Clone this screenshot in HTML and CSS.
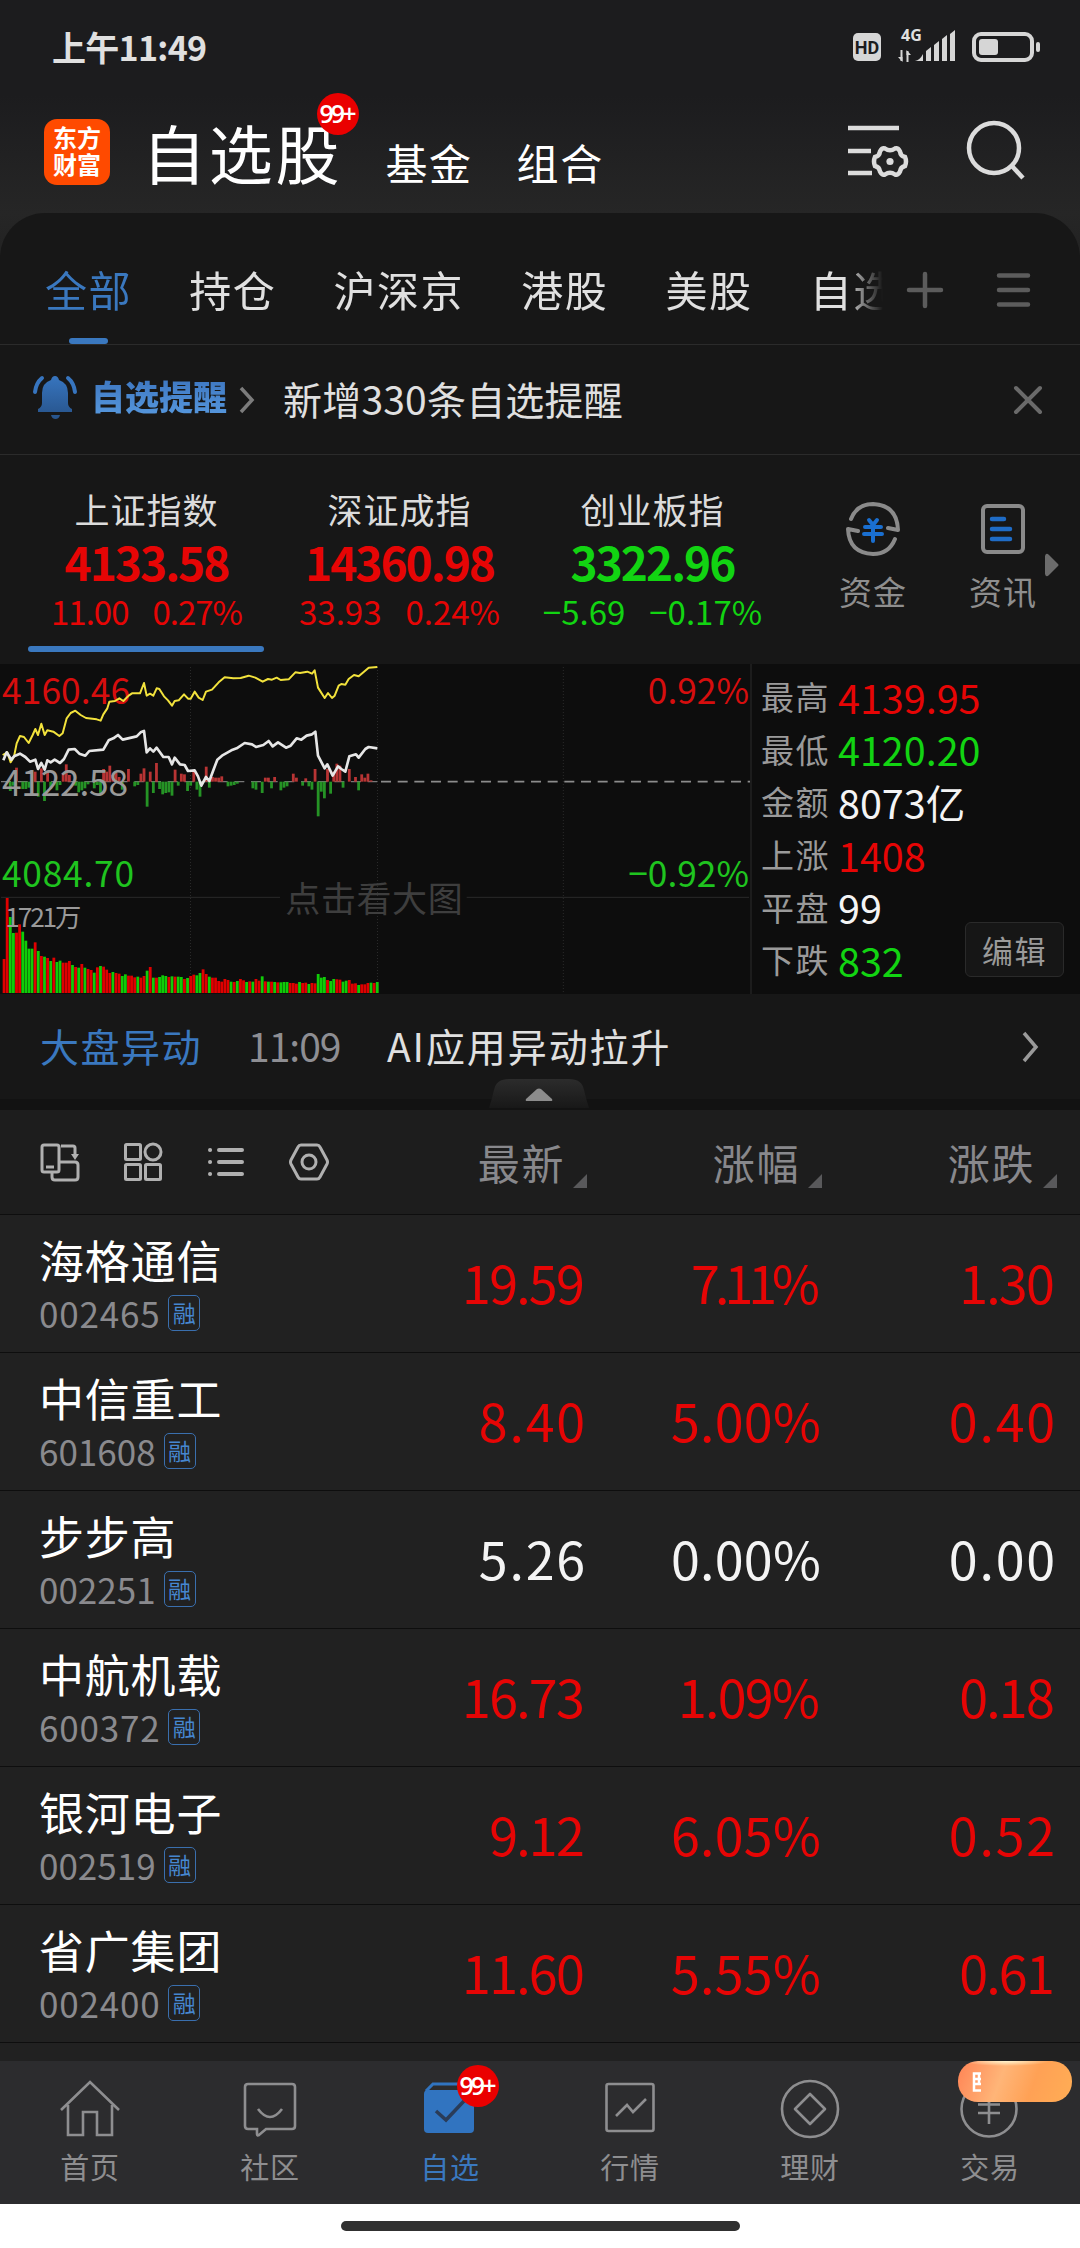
FILE: index.html
```html
<!DOCTYPE html>
<html lang="zh-CN">
<head>
  <meta charset="UTF-8" />
  <meta name="viewport" content="width=device-width, initial-scale=1.0" />
  <title>自选股</title>
  <link rel="stylesheet" href="styles.css">
</head>
<body>
  <div class="top">
    <div class="status-bar">
      <span class="time">上午11:49</span>
      <div class="status-icons">
        <span class="hd">HD</span>
        <div class="signal">
          <span class="net">4G</span>
          <svg width="58" height="32" viewBox="0 0 58 32" fill="#d6d6d6">
            <path d="M3.5 18v11M9.500 19v11" stroke="#d6d6d6" stroke-width="2" />
            <path d="M0 25l4.500 5v-5zM13 23l-4.500-5v5z" />
            <path d="M17 29q5-1 8-7v7zM28 19l5-4v14h-5zM36 13l5-4v20h-5zM44 7l5-4v26h-5zM52 2l5-4v31h-5z" />
          </svg>
        </div>
        <svg class="battery" width="69" height="32" viewBox="0 0 69 32" fill="none">
          <rect x="2" y="3" width="58" height="26" rx="7" stroke="#d6d6d6" stroke-width="4" />
          <rect x="7" y="8" width="19" height="16" rx="3" fill="#d6d6d6" />
          <rect x="64" y="11" width="4" height="10" rx="2" fill="#d6d6d6" />
        </svg>
      </div>
    </div>

    <div class="header">
      <div class="logo">东方<br>财富</div>
      <div class="title">自选股<span class="badge">99+</span></div>
      <div class="header-link">基金</div>
      <div class="header-link">组合</div>
      <svg class="settings-icon" width="62" height="62" viewBox="0 0 62 62" fill="none" stroke="#dcdcdc" stroke-width="4.500">
        <path d="M1 8h51M1 31h23M1 53h24" />
        <path d="M38 28.500q5 3.500 10 0 3-1 5 3 .5 4.500 5 5.500 2 4.500 0 9-4.500 1-5 5.500-2 4-5 3-5-3.500-10 0-3 1-5-3-.5-4.500-5-5.500-2-4.500 0-9 4.500-1 5-5.500 2-4 5-3z" />
        <circle cx="43" cy="41.500" r="3.600" fill="#dcdcdc" stroke="none" />
      </svg>
      <svg class="search-icon" width="62" height="62" viewBox="0 0 62 62" fill="none" stroke="#dcdcdc" stroke-width="4.500">
        <circle cx="28" cy="28" r="25" />
        <path d="M45 45l12 13" />
      </svg>
    </div>
  </div>

  <div class="panel">
    <div class="tabs">
      <div class="tab-list">
        <span class="tab active">全部</span>
        <span class="tab">持仓</span>
        <span class="tab">沪深京</span>
        <span class="tab">港股</span>
        <span class="tab">美股</span>
        <span class="tab">自选</span>
      </div>
      <svg width="38" height="38" viewBox="0 0 38 38" stroke="#5c5c5c" stroke-width="4.500" stroke-linecap="round">
        <path d="M19 3v32M3 19h32" />
      </svg>
      <svg class="menu-icon" width="38" height="38" viewBox="0 0 38 38" stroke="#5c5c5c" stroke-width="4.500" stroke-linecap="round">
        <path d="M5 4.500h29M5 19h29M5 33.500h29" />
      </svg>
    </div>

    <div class="alert">
      <svg width="46" height="46" viewBox="0 0 46 46">
        <defs>
          <linearGradient id="bell" x1="0" y1="0" x2="0" y2="1">
            <stop offset="0" stop-color="#3775bf" />
            <stop offset="1" stop-color="#27538a" />
          </linearGradient>
        </defs>
        <path fill="url(#bell)" d="M23 2q3 0 4 4 9 3 9 13v10q0 4 4 6v3H6v-3q4-2 4-6V19q0-10 9-13 1-4 4-4zM19 41h9q-1 4-4.500 4t-4.500-4z" />
        <path d="M3 18q1-9 7-14M43 18q-1-9-7-14" fill="none" stroke="#3775bf" stroke-width="4" stroke-linecap="round" />
      </svg>
      <span class="alert-title">自选提醒</span>
      <svg width="16" height="28" viewBox="0 0 16 28" fill="none" stroke="#7c7c7c" stroke-width="3.500">
        <path d="M2 2l11 12L2 26" />
      </svg>
      <span class="alert-text">新增330条自选提醒</span>
      <svg class="close" width="30" height="30" viewBox="0 0 30 30" stroke="#6a6a6a" stroke-width="4" stroke-linecap="round">
        <path d="M3 3l24 24M27 3L3 27" />
      </svg>
    </div>

    <div class="indexes">
      <div class="index up active">
        <span class="index-name">上证指数</span>
        <span class="index-value">4133.58</span>
        <span class="index-change narrow"><b>11.00</b><b>0.27%</b></span>
      </div>
      <div class="index up">
        <span class="index-name">深证成指</span>
        <span class="index-value">14360.98</span>
        <span class="index-change"><b>33.93</b><b>0.24%</b></span>
      </div>
      <div class="index down">
        <span class="index-name">创业板指</span>
        <span class="index-value">3322.96</span>
        <span class="index-change"><b>−5.69</b><b>−0.17%</b></span>
      </div>
      <div class="quick">
        <svg width="56" height="56" viewBox="0 0 56 56" fill="none" stroke="#8a8a8a" stroke-width="4" stroke-linecap="round" stroke-linejoin="round">
          <path d="M6 18Q12 3 28 3q24 1 25 26l-10-2M50 38q-6 15-22 15Q4 52 3 28l10 2" />
          <path d="M24 19l4 5 4-5M20 26h16M19 33h18M28 24v16" stroke="#1a6fd0" />
        </svg>
        <span>资金</span>
      </div>
      <div class="quick">
        <svg width="56" height="56" viewBox="0 0 56 56" fill="none" stroke-linecap="round">
          <rect x="8" y="5" width="40" height="46" rx="4" stroke="#8a8a8a" stroke-width="4" />
          <path d="M17 18h12M17 28h18M17 38h18" stroke="#1f6cc6" stroke-width="4.500" />
        </svg>
        <span>资讯</span>
      </div>
      <svg class="more" width="14" height="24" viewBox="0 0 14 24" fill="#6c6c6c">
        <path d="M0 3q1-4 4-1l9 9q1 1 0 2l-9 9q-3 3-4-1z" />
      </svg>
    </div>
  </div>

  <div class="market">
    <svg class="chart" id="chart" width="750" height="330" viewBox="0 27 2250 990">
      <g stroke="#2a2a2a" stroke-width="3" stroke-dasharray="3 6">
        <path d="M571.500 36V1014M1132.500 36V1014M1690 36V1014" />
      </g>
      <path d="M3 727H840M1400 727H2247" stroke="#292929" stroke-width="3" />
      <path d="M1143 380H2250" stroke="#8c8c8c" stroke-width="5" stroke-dasharray="30 20" />
      <path d="M3 380H1132" stroke="#777" stroke-width="4" stroke-dasharray="30 20" />
      <g id="ticks"></g>
      <g id="volume"></g>
      <text class="label up" x="6" y="147" textLength="384">4160.46</text>
      <text class="label mid" x="6" y="422" textLength="378">4122.58</text>
      <text class="label down" x="6" y="696" textLength="396">4084.70</text>
      <text class="label up" x="2247" y="147" text-anchor="end">0.92%</text>
      <text class="label down" x="2247" y="696" text-anchor="end">−0.92%</text>
      <text class="label vol" x="16" y="816" textLength="228">1721万</text>
      <text class="label hint" x="856" y="770" textLength="532">点击看大图</text>
      <polyline id="avg" fill="none" stroke="#f2e23c" stroke-width="6" stroke-linejoin="round" />
      <polyline id="price" fill="none" stroke="#e6e6e6" stroke-width="8" stroke-linejoin="round" />
    </svg>
    <div class="summary">
      <div class="summary-row"><span>最高</span><span class="up">4139.95</span></div>
      <div class="summary-row"><span>最低</span><span class="down">4120.20</span></div>
      <div class="summary-row"><span>金额</span><span class="flat">8073亿</span></div>
      <div class="summary-row"><span>上涨</span><span class="up">1408</span></div>
      <div class="summary-row"><span>平盘</span><span class="flat">99</span></div>
      <div class="summary-row"><span>下跌</span><span class="down">832</span></div>
      <button class="edit-btn">编辑</button>
    </div>
  </div>

  <div class="news">
    <span class="news-tag">大盘异动</span>
    <span class="news-time">11:09</span>
    <span class="news-text">AI应用异动拉升</span>
    <svg class="news-arrow" width="18" height="32" viewBox="0 0 18 32" fill="none" stroke="#9a9a9a" stroke-width="3.500">
      <path d="M2 2l12 14L2 30" />
    </svg>
    <svg class="handle" width="100" height="29" viewBox="0 0 100 29">
      <defs>
        <linearGradient id="tab" x1="0" y1="0" x2="0" y2="1">
          <stop offset="0" stop-color="#2c2c2c" />
          <stop offset="1" stop-color="#181818" />
        </linearGradient>
      </defs>
      <path fill="url(#tab)" d="M0 29Q3 20 5 11 7 0 20 0h60q13 0 15 11 2 9 5 18z" />
      <path fill="#8c8c8c" d="M37 20l11-10q2-1 4 0l11 10q1 2-1 2H38q-2 0-1-2z" />
    </svg>
  </div>

  <div class="stock-table">
    <div class="table-head">
      <div class="tools">
        <svg width="40" height="40" viewBox="0 0 40 40" fill="none" stroke="#b0b0b0" stroke-width="3">
          <rect x="2" y="3" width="17" height="27" rx="2" />
          <path d="M6 25h8M21 4h12q2 0 2 2v9M12 30v5q0 3 3 3h20q3 0 3-3V23q0-3-3-3H19" />
          <path d="M31 12h8l-4 6z" fill="#b0b0b0" stroke="none" />
        </svg>
        <svg width="40" height="40" viewBox="0 0 40 40" fill="none" stroke="#b0b0b0" stroke-width="3">
          <rect x="2.500" y="2.500" width="15" height="15" rx="1" />
          <circle cx="30" cy="10" r="8" />
          <rect x="2.500" y="22.500" width="15" height="15" rx="1" />
          <rect x="22.500" y="22.500" width="15" height="15" rx="1" />
        </svg>
        <svg width="40" height="40" viewBox="0 0 40 40" stroke="#b0b0b0" stroke-width="4" stroke-linecap="round">
          <path d="M4 8h.1M4 20h.1M4 32h.1M13 8h23M13 20h23M13 32h23" />
        </svg>
        <svg width="40" height="40" viewBox="0 0 40 40" fill="none" stroke="#b0b0b0" stroke-width="3">
          <path d="M12 3h16q2 0 3 2l7 13q1 2 0 4l-7 13q-1 2-3 2H12q-2 0-3-2L2 22q-1-2 0-4L9 5q1-2 3-2z" />
          <circle cx="20" cy="20" r="7" />
        </svg>
      </div>
      <span class="col">最新</span>
      <span class="col">涨幅</span>
      <span class="col">涨跌</span>
    </div>
    <div class="stock up">
      <div class="stock-info">
        <div class="stock-name">海格通信</div>
        <div class="stock-code">002465<span class="margin">融</span></div>
      </div>
      <span class="one">19.59</span>
      <span class="two">7.11%</span>
      <span class="one">1.30</span>
    </div>
    <div class="stock up">
      <div class="stock-info">
        <div class="stock-name">中信重工</div>
        <div class="stock-code narrow">601608<span class="margin">融</span></div>
      </div>
      <span>8.40</span>
      <span class="pct">5.00%</span>
      <span>0.40</span>
    </div>
    <div class="stock flat">
      <div class="stock-info">
        <div class="stock-name">步步高</div>
        <div class="stock-code narrow">002251<span class="margin">融</span></div>
      </div>
      <span>5.26</span>
      <span class="pct">0.00%</span>
      <span>0.00</span>
    </div>
    <div class="stock up">
      <div class="stock-info">
        <div class="stock-name">中航机载</div>
        <div class="stock-code">600372<span class="margin">融</span></div>
      </div>
      <span class="one">16.73</span>
      <span class="one">1.09%</span>
      <span class="one">0.18</span>
    </div>
    <div class="stock up">
      <div class="stock-info">
        <div class="stock-name">银河电子</div>
        <div class="stock-code narrow">002519<span class="margin">融</span></div>
      </div>
      <span class="one">9.12</span>
      <span class="pct">6.05%</span>
      <span>0.52</span>
    </div>
    <div class="stock up">
      <div class="stock-info">
        <div class="stock-name">省广集团</div>
        <div class="stock-code">002400<span class="margin">融</span></div>
      </div>
      <span class="one">11.60</span>
      <span class="pct">5.55%</span>
      <span class="one">0.61</span>
    </div>
  </div>

  <div class="nav">
    <div class="nav-item">
      <svg width="64" height="64" viewBox="0 0 64 64" fill="none" stroke="#8e8e90" stroke-width="2.600">
        <path d="M3 33L32 5l29 28M10 28v30h15V35h14v23h15V28" />
      </svg>
      <span>首页</span>
    </div>
    <div class="nav-item">
      <svg width="64" height="64" viewBox="0 0 64 64" fill="none" stroke="#8e8e90" stroke-width="2.600">
        <path d="M10 7h44q3 0 3 3v39q0 3-3 3H28l-7 6q-2 1-2-1v-5h-9q-3 0-3-3V10q0-3 3-3z" />
        <path d="M20 32q12 16 24 0" />
      </svg>
      <span>社区</span>
    </div>
    <div class="nav-item active">
      <svg width="64" height="64" viewBox="0 0 64 64" fill="none">
        <path d="M8 14l7-7h35l7 7" stroke="#3174c0" stroke-width="3" />
        <rect x="6" y="13" width="50" height="43" rx="4" fill="#3174c0" />
        <path d="M18 34l10 9 18-19" stroke="#2a3c58" stroke-width="3.500" />
      </svg>
      <span>自选</span>
      <span class="badge">99+</span>
    </div>
    <div class="nav-item">
      <svg width="64" height="64" viewBox="0 0 64 64" fill="none" stroke="#8e8e90" stroke-width="2.600">
        <rect x="8.500" y="7" width="47" height="47" rx="2" />
        <path d="M18 39l11-11 6 7 13-13" />
      </svg>
      <span>行情</span>
    </div>
    <div class="nav-item">
      <svg width="64" height="64" viewBox="0 0 64 64" fill="none" stroke="#8e8e90" stroke-width="2.600" stroke-linejoin="round">
        <circle cx="32" cy="32" r="28" />
        <path d="M32 17l15 15-15 15-15-15z" />
      </svg>
      <span>理财</span>
    </div>
    <div class="nav-item">
      <svg width="64" height="64" viewBox="0 0 64 64" fill="none" stroke="#8e8e90" stroke-width="2.600">
        <circle cx="31" cy="32" r="27.500" />
        <path d="M24 17l7 8 7-8M20 27.500h22M20 36h22M31 25v22" />
      </svg>
      <span>交易</span>
      <span class="promo"><svg width="9" height="20" viewBox="0 0 9 20" fill="none" stroke="#fff" stroke-width="2.500"><path d="M9 1.500H2v17h7M2 7h7M2 12h7M7 1v12" /></svg></span>
    </div>
  </div>
  <div class="home-bar"></div>

  <script src="script.js"></script>
</body>
</html>
```
FILE: styles.css
```css
* {
  margin: 0;
  padding: 0;
  box-sizing: border-box;
}

body {
  width: 1080px;
  height: 2248px;
  background: #fff;
  font-family: 'Noto Sans CJK SC', 'Noto Sans', sans-serif;
  color: #e0e0e0;
  overflow: hidden;
}

svg {
  display: block;
  flex-shrink: 0;
}

span, .title, .header-link {
  white-space: nowrap;
}

.up { color: #e60505; fill: #d60e0e; }
.down { color: #12d412; fill: #1fc41f; }
.flat { color: #f4f4f4; }

/* top */
.top {
  height: 258px;
  background: linear-gradient(180deg, #1c1c1e 0, #1c1c1e 95px, #262626 213px, #222 258px);
}

.status-bar {
  height: 94px;
  display: flex;
  justify-content: space-between;
  align-items: center;
  padding: 0 39px 0 52px;
}

.time {
  font-size: 34px;
  font-weight: 700;
  letter-spacing: -0.7px;
  line-height: 90px;
}

.status-icons {
  display: flex;
  align-items: center;
}

.hd {
  width: 28px;
  height: 28px;
  border-radius: 5px;
  background: #d6d6d6;
  color: #1c1c1e;
  font: 700 18px/29px Roboto, sans-serif;
  text-align: center;
}

.signal {
  position: relative;
  margin: 0 16px 0 17px;
  padding-top: 2px;
}

.signal svg {
  overflow: visible;
}

.net {
  position: absolute;
  left: 3px;
  top: -3px;
  font: 700 16px/16px 'Open Sans', sans-serif;
}

.header {
  height: 119px;
  display: flex;
  align-items: center;
  padding-left: 44px;
}

.logo {
  width: 66px;
  height: 66px;
  margin-top: -4px;
  border-radius: 13px;
  background: #ff4a00;
  color: #fff;
  font-size: 24px;
  font-weight: 700;
  line-height: 27px;
  padding-top: 4px;
  text-align: center;
}

.title {
  position: relative;
  margin-left: 32px;
  color: #fff;
  font-size: 64px;
  letter-spacing: 2.8px;
  line-height: 80px;
  margin-top: -5px;
}

.badge {
  position: absolute;
  width: 42px;
  height: 42px;
  border-radius: 50%;
  background: #ea0000;
  color: #fff;
  font: 600 25px/41px 'Open Sans', sans-serif;
  letter-spacing: -3px;
  text-indent: -3px;
  text-align: center;
}

.title .badge {
  left: 175px;
  top: -18px;
}

.header-link {
  color: #fff;
  font-size: 42px;
  letter-spacing: 1.6px;
  margin-left: 44px;
  margin-top: 15px;
}

.title + .header-link {
  margin-left: 43px;
}

.settings-icon {
  margin-left: auto;
  margin-top: -6px;
}

.search-icon {
  margin: -6px 52px 0 57px;
}

/* panel */
.panel {
  position: relative;
  margin-top: -45px;
  height: 451px;
  border-radius: 45px 45px 0 0;
  background: #171717;
}

.tabs {
  height: 132px;
  display: flex;
  align-items: center;
  padding: 23px 48px 0 45px;
  border-bottom: 1px solid #2b2b2b;
}

.tab-list {
  display: flex;
  gap: 57px;
  width: 838px;
  margin-right: 23px;
  height: 108px;
  overflow: hidden;
  -webkit-mask-image: linear-gradient(90deg, #000 800px, transparent 838px);
  mask-image: linear-gradient(90deg, #000 800px, transparent 838px);
}

.tab {
  position: relative;
  font-size: 42px;
  letter-spacing: 1.6px;
  line-height: 105px;
}

.tab.active {
  color: #3a78bf;
}

.tab.active::after {
  content: '';
  position: absolute;
  left: 24px;
  bottom: 0;
  width: 39px;
  height: 6px;
  border-radius: 3px;
  background: #3a78bf;
}

.menu-icon {
  margin-left: auto;
}

.alert {
  height: 110px;
  display: flex;
  align-items: center;
  padding: 0 37px 0 32px;
  border-bottom: 1px solid #2b2b2b;
}

.alert > svg:first-child {
  margin-top: -6px;
}

.alert-title {
  font-size: 34px;
  font-weight: 900;
  line-height: 46px;
  width: 148px;
  margin-top: -8px;
  margin-left: 13px;
  background: linear-gradient(180deg, #3a72bd, #589adf);
  -webkit-background-clip: text;
  background-clip: text;
  color: transparent;
}

.alert-text {
  font-size: 39px;
  letter-spacing: 0.2px;
  margin-left: 28px;
  margin-top: -3px;
}

.close {
  margin-left: auto;
}

.indexes {
  display: flex;
  padding-left: 20px;
  height: 208px;
}

.index {
  position: relative;
  width: 253px;
  display: flex;
  flex-direction: column;
  align-items: center;
  padding-top: 28px;
}

.index-name {
  font-size: 35px;
  letter-spacing: 1px;
  line-height: 52px;
  color: #dcdcdc;
}

.index-value {
  font-size: 46px;
  font-weight: 700;
  letter-spacing: -2px;
  line-height: 53px;
}

.index-change {
  display: flex;
  gap: 24px;
  font-size: 33px;
  line-height: 46px;
}

.index-change b {
  font-weight: 400;
}

.index-change.narrow {
  letter-spacing: -1px;
}

.index.active::after {
  content: '';
  position: absolute;
  left: 8px;
  bottom: 11px;
  width: 236px;
  height: 6px;
  border-radius: 3px;
  background: #3a78bf;
}

.quick {
  width: 130px;
  display: flex;
  flex-direction: column;
  align-items: center;
  padding-top: 46px;
  margin-left: 29px;
  font-size: 33px;
  letter-spacing: 1px;
  color: #8e8e8e;
}

.quick + .quick {
  margin-left: 0;
}

.quick span {
  line-height: 46px;
  margin-top: 11px;
}

.more {
  position: absolute;
  left: 1045px;
  top: 340px;
}

/* chart */
.market {
  height: 330px;
  display: flex;
  background: #0d0d0d;
}

.label {
  font-size: 106px;
}

.label.mid { fill: #9a9a9a; }
.label.vol { fill: #9a9a9a; font-size: 79px; }
.label.hint { fill: #3e3e3e; font-size: 105px; }

.summary {
  position: relative;
  flex: 1;
  border-left: 2px solid #1c1c1c;
  padding: 6px 0 0 9px;
}

.summary-row {
  display: flex;
  gap: 8px;
  height: 52.6px;
  align-items: center;
  color: #9a9a9a;
  font-size: 33px;
  letter-spacing: 1.5px;
}

.summary-row span + span {
  font-size: 39.5px;
  letter-spacing: 0;
}

.edit-btn {
  position: absolute;
  left: 213px;
  top: 258px;
  width: 99px;
  height: 55px;
  border: 1px solid #2a2a2a;
  border-radius: 6px;
  background: #161616;
  color: #9a9a9a;
  font: 31px/46px 'Noto Sans CJK SC', sans-serif;
  letter-spacing: 1.5px;
}

/* news */
.news {
  position: relative;
  height: 116px;
  display: flex;
  padding: 0 40px;
  font-size: 39px;
  line-height: 102px;
  background: #171717;
  border-bottom: 11px solid #121212;
}

.news-tag {
  color: #3a78bf;
  letter-spacing: 1.5px;
  width: 208px;
}

.news-time {
  color: #8e8e93;
  width: 139px;
  letter-spacing: -1px;
}

.news-text {
  letter-spacing: 1.9px;
}

.news-arrow {
  margin: 37px 0 0 auto;
}

.handle {
  position: absolute;
  left: 489px;
  top: 85px;
}

/* table */
.stock-table {
  height: 951px;
  background: #212121;
}

.table-head, .stock {
  display: grid;
  grid-template-columns: 352px 235px 235px 235px;
  align-items: center;
  border-bottom: 1.5px solid #0e0e0e;
}

.table-head {
  height: 105px;
  background: #1d1d1d;
}

.tools {
  display: flex;
  gap: 43px;
  padding-left: 40px;
  margin-top: -1px;
}

.col {
  position: relative;
  padding-right: 22px;
  text-align: right;
  color: #88888c;
  font-size: 42px;
  letter-spacing: 1.6px;
  line-height: 60px;
}

.col::after {
  content: '';
  position: absolute;
  right: 0;
  bottom: 4px;
  border-left: 14px solid transparent;
  border-bottom: 14px solid #59595b;
}

.stock {
  height: 138px;
}

.stock-info {
  padding-left: 39px;
}

.stock-name {
  color: #fff;
  font-size: 45px;
  letter-spacing: 0.8px;
  line-height: 56px;
}

.stock-code {
  display: flex;
  align-items: center;
  color: #8a8a8e;
  font-size: 35px;
  letter-spacing: 0.8px;
  line-height: 48px;
  position: relative;
  top: 1.5px;
}

.stock-code.narrow {
  letter-spacing: 0;
}

.margin {
  width: 32px;
  height: 36px;
  margin-left: 8px;
  border: 1.5px solid #3a6fae;
  border-radius: 5px;
  color: #4687d0;
  font-size: 23px;
  line-height: 32px;
  letter-spacing: 0;
  text-align: center;
}

.stock > span {
  text-align: right;
  font-size: 52px;
  line-height: 76px;
  letter-spacing: 1.8px;
  margin-top: -3px;
}

.stock > .pct {
  letter-spacing: 0.2px;
  padding-right: 1px;
}

/* narrow figure one */
.stock > .one {
  letter-spacing: -1.8px;
  padding-right: 4px;
}

.stock > .two {
  letter-spacing: -5px;
  padding-right: 7px;
}

/* bottom nav */
.nav {
  height: 143px;
  display: flex;
  background: #2c2c2e;
}

.nav-item {
  position: relative;
  width: 180px;
  display: flex;
  flex-direction: column;
  align-items: center;
  padding-top: 16px;
  font-size: 29px;
  letter-spacing: 0.8px;
  color: #8e8e90;
}

.nav-item > span:not(.badge) {
  line-height: 42px;
  margin-top: 4px;
}

.nav-item.active {
  color: #3a78bf;
}

.nav-item .badge {
  left: 97px;
  top: 4px;
}

.nav-item .promo {
  position: absolute;
  left: 58px;
  top: -4px;
  width: 114px;
  height: 41px;
  padding: 11px 0 0 14px;
  border-radius: 20px;
  background: radial-gradient(ellipse 44px 5px at 48px 0, #fff6d0, transparent), linear-gradient(110deg, #ff8455, #ffb578 38%, #ffa155 65%, #ffad55);
}

.home-bar {
  width: 399px;
  height: 10px;
  margin: 17px auto 0;
  border-radius: 5px;
  background: #303030;
}
```
FILE: script.js
```js
const SVG = 'http://www.w3.org/2000/svg';

// one bar per minute: height + direction
const volume = ('102r 285r 228g 180g 181r 206r 184g 157g 133g 133g 152r 126g 111r 109g 105r 96g 106r 93g 97g 91r ' +
  '91r 96r 84g 78r 76g 87r 76g 72r 69r 61g 77r 81g 79r 70r 60r 63g 60r 58r 51g 56g ' +
  '52r 52r 47r 49g 46r 51r 67g 78r 46g 46r 48g 53g 51g 48r 50g 49r 49g 48g 42r 45g ' +
  '51r 55r 53g 60g 71r 57r 49g 46r 46r 36r 34r 42r 39r 34g 33r 36g 42r 38r 33g 35r ' +
  '34g 42r 37r 50g 35r 34g 34r 33g 32r 32g 33g 33g 30r 30r 28r 33g 30r 31r 27g 30r ' +
  '29r 57g 46g 48g 39r 36g 42g 41r 40r 34g 37g 39r 28r 29r 24g 26r 26r 30r 31g 30r 33g').split(' ');

// [bar index, height], negative bars hang below the middle line
const ticks = [
  [2, -28], [3, -12], [4, 42], [6, -22], [7, -22], [8, -18], [10, 30], [11, -45], [12, 40], [13, -58], [14, 28],
  [15, -22], [17, -26], [18, -10], [19, 24], [20, 52], [21, 20], [23, -12], [24, -32], [25, -26], [26, -20], [27, -8],
  [29, -20], [30, -10], [31, -34], [32, 38], [33, 30], [34, 48], [35, 20], [36, 26], [37, 14], [38, -24], [40, 38],
  [42, -14], [43, -10], [44, 24], [45, 40], [46, -75], [47, 30], [48, -34], [49, 56], [50, -22], [51, -38], [52, -34],
  [53, -32], [54, -42], [55, 36], [56, -12], [57, 24], [58, 22], [59, -28], [60, -12], [61, 34], [62, -24], [63, -45],
  [65, 45], [66, -18], [67, 14], [68, 12], [69, 12], [70, 16], [72, -14], [73, -12], [74, -10], [75, -6], [80, -20],
  [81, -24], [83, -34], [84, 12], [85, 12], [86, -20], [87, 14], [89, -26], [90, -18], [91, -14], [93, 24], [94, 12],
  [96, -12], [97, 10], [98, -14], [99, -24], [100, 38], [101, -104], [102, -30], [103, -50], [104, 38], [105, -36],
  [106, 30], [107, 54], [108, 48], [109, -18], [111, 38], [113, 14], [114, -26], [115, 22], [116, 12], [117, 24], [118, 4]
];

const avg = '8,300 22,292 32,322 42,305 50,265 60,243 72,246 86,264 98,240 106,222 114,240 124,206 134,240 142,226 160,230 178,243 188,235 200,190 212,174 226,167 242,180 258,189 290,193 302,197 310,178 322,160 328,140 345,138 358,130 370,138 386,122 396,115 420,115 432,84 440,122 450,116 460,122 470,100 478,102 492,124 504,136 516,152 524,138 536,136 552,118 564,131 572,131 584,110 596,128 608,135 618,110 636,104 656,82 674,67 700,70 722,69 746,62 766,68 788,80 804,72 816,74 830,68 842,75 866,73 886,52 900,54 922,50 936,56 944,46 954,98 974,129 984,114 996,129 1004,122 1016,92 1024,87 1036,89 1046,72 1062,60 1076,64 1092,50 1106,38 1132,36';
const price = '10,316 20,292 34,314 42,304 60,296 76,306 90,320 106,314 114,342 124,324 134,344 142,316 152,322 164,314 180,324 192,312 206,284 224,282 238,296 256,302 268,288 310,284 326,256 340,250 354,240 368,254 410,244 422,232 432,228 440,292 450,280 460,290 470,278 490,306 506,306 516,328 524,308 540,328 554,330 564,348 584,346 594,364 604,392 618,366 628,378 640,346 652,314 666,302 694,286 710,280 734,264 756,268 768,276 790,270 806,258 818,274 834,262 858,278 872,272 890,250 904,254 920,242 936,238 946,230 954,302 974,340 982,328 998,362 1014,334 1024,342 1036,350 1048,304 1068,298 1076,308 1096,282 1106,276 1132,280';

function bar(parent, i, y, height, color) {
  const rect = document.createElementNS(SVG, 'rect');
  rect.setAttribute('x', 8 + i * 9.33);
  rect.setAttribute('y', y);
  rect.setAttribute('width', 8.4);
  rect.setAttribute('height', height);
  rect.setAttribute('fill', color);
  parent.appendChild(rect);
}

const volumeGroup = document.getElementById('volume');
volume.forEach((v, i) => {
  const height = parseInt(v, 10);
  bar(volumeGroup, i, 1014 - height, height, v.endsWith('r') ? '#e00000' : '#10cc08');
});

const tickGroup = document.getElementById('ticks');
ticks.forEach(([i, h]) => {
  bar(tickGroup, i, h > 0 ? 380 - h : 380, Math.abs(h), h > 0 ? '#b83434' : '#259325');
});

document.getElementById('avg').setAttribute('points', avg);
document.getElementById('price').setAttribute('points', price);
```
